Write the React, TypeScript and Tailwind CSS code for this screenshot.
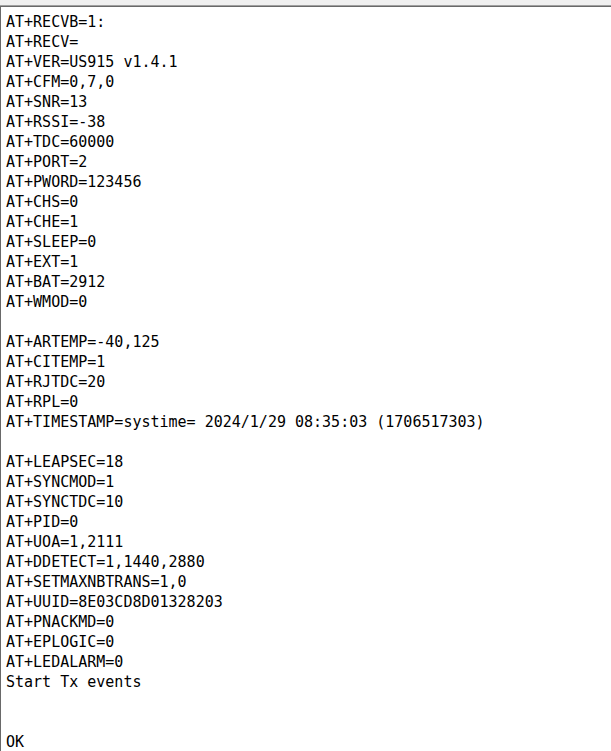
import React from 'react';

const lines = [
  'AT+RECVB=1:',
  'AT+RECV=',
  'AT+VER=US915 v1.4.1',
  'AT+CFM=0,7,0',
  'AT+SNR=13',
  'AT+RSSI=-38',
  'AT+TDC=60000',
  'AT+PORT=2',
  'AT+PWORD=123456',
  'AT+CHS=0',
  'AT+CHE=1',
  'AT+SLEEP=0',
  'AT+EXT=1',
  'AT+BAT=2912',
  'AT+WMOD=0',
  '',
  'AT+ARTEMP=-40,125',
  'AT+CITEMP=1',
  'AT+RJTDC=20',
  'AT+RPL=0',
  'AT+TIMESTAMP=systime= 2024/1/29 08:35:03 (1706517303)',
  '',
  'AT+LEAPSEC=18',
  'AT+SYNCMOD=1',
  'AT+SYNCTDC=10',
  'AT+PID=0',
  'AT+UOA=1,2111',
  'AT+DDETECT=1,1440,2880',
  'AT+SETMAXNBTRANS=1,0',
  'AT+UUID=8E03CD8D01328203',
  'AT+PNACKMD=0',
  'AT+EPLOGIC=0',
  'AT+LEDALARM=0',
  'Start Tx events',
  '',
  '',
  'OK',
];

export default function App() {
  return (
    <div className="w-[611px] h-[751px] overflow-hidden bg-[#f0f0f0] pt-[5px]">
      <div className="h-full border-t border-[#a0a0a0]">
        <div className="h-full bg-white border-t border-l border-[#696969] pl-[5px] pt-[5px]">
          {lines.map((line, i) => (
            <div
              key={i}
              className="h-[20px] leading-[20px] text-[15px] text-black whitespace-pre font-['DejaVu_Sans_Mono',monospace]"
            >
              {line}
            </div>
          ))}
        </div>
      </div>
    </div>
  );
}
